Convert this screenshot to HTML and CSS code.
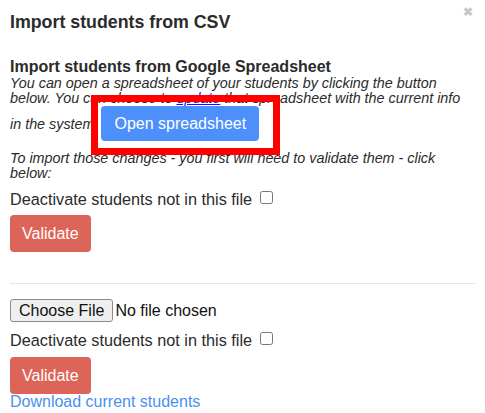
FILE: index.html
```html
<!DOCTYPE html>
<html>
<head>
<meta charset="utf-8">
<link rel="stylesheet" href="styles.css">
</head>
<body>
<div class="modal">
  <div class="header">
    <h3 class="title">Import students from CSV</h3>
    <span class="close">&#x2716;</span>
  </div>
  <div class="section">
    <h4 class="subtitle">Import students from Google Spreadsheet</h4>
    <p class="note">You can open a spreadsheet of your students by clicking the button below. You can choose to <a href="#" class="update">update</a> that spreadsheet with the current info in the system. <span class="open-wrap"><button class="btn btn-blue">Open spreadsheet</button><span class="highlight"></span></span></p>
    <p class="note note2">To import those changes - you first will need to validate them - click below:</p>
    <label class="deact">Deactivate students not in this file <input type="checkbox"></label>
    <button class="btn btn-red">Validate</button>
  </div>
  <hr class="rule">
  <div class="section">
    <div class="file-row"><span class="file-btn">Choose File</span><span class="file-text">No file chosen</span></div>
    <label class="deact deact2">Deactivate students not in this file <input type="checkbox"></label>
    <button class="btn btn-red btn-red2">Validate</button>
    <a href="#" class="download">Download current students</a>
  </div>
</div>
</body>
</html>
```
FILE: styles.css
```css
* { box-sizing: border-box; }
html, body { margin: 0; padding: 0; background: #fff; }
body {
  font-family: "Liberation Sans", Arial, sans-serif;
  color: #222;
  overflow: hidden;
}
.modal { padding: 0 10px; }
.header {
  display: flex;
  justify-content: space-between;
  align-items: flex-start;
}
.title {
  margin: 11px 0 0;
  font-size: 17.8px;
  line-height: 22px;
  font-weight: bold;
  color: #2b2b2b;
}
.close {
  margin-top: 5px;
  margin-right: 2px;
  font-size: 12px;
  color: #c8c8c8;
  font-weight: bold;
}
.subtitle {
  margin: 24px 0 0;
  font-size: 16px;
  line-height: 19px;
  font-weight: bold;
  color: #2b2b2b;
}
.note {
  margin: 0;
  font-size: 14.35px;
  line-height: 15px;
  font-style: italic;
  color: #2b2b2b;
}
.update { color: #1a0dff; }
.open-wrap {
  position: relative;
  display: inline-block;
  margin-left: -1px;
}
.btn {
  border: none;
  color: #fff;
  font-family: "Liberation Sans", Arial, sans-serif;
  font-size: 16px;
  line-height: 19px;
  border-radius: 4px;
  cursor: pointer;
}
.btn-blue {
  background: #4e90fb;
  padding: 8px 13px;
  margin: 0;
  font-style: normal;
  vertical-align: baseline;
}
.highlight {
  position: absolute;
  left: -10px;
  top: -11px;
  right: -21px;
  bottom: -14px;
  border: 7px solid #f00;
  pointer-events: none;
}
.note2 { margin-top: 10px; }
.deact {
  display: block;
  margin-top: 9px;
  font-size: 16.25px;
  line-height: 19px;
  color: #2b2b2b;
}
.deact input {
  margin: 0 0 0 3px;
  width: 13px;
  height: 13px;
  vertical-align: 1px;
}
.btn-red {
  display: block;
  margin-top: 6px;
  background: #dd6458;
  padding: 9px 12px;
  border-radius: 4px;
}
.rule {
  border: none;
  border-top: 1px solid #e6e6e6;
  margin: 31px 0 15px;
}
.file-row {
  display: flex;
  align-items: center;
  font-size: 16px;
}
.file-btn {
  display: inline-block;
  border: 1px solid #8a8a8a;
  border-radius: 3px;
  background: #efefef;
  padding: 1px 8px;
  height: 23px;
  line-height: 20px;
  color: #111;
}
.file-text { margin-left: 2px; color: #111; }
.deact2 { margin-top: 9px; }
.btn-red2 { margin-top: 7px; }
.download {
  display: block;
  font-size: 16px;
  line-height: 16px;
  color: #4a8ff0;
  text-decoration: none;
  margin-top: 0;
}
```
